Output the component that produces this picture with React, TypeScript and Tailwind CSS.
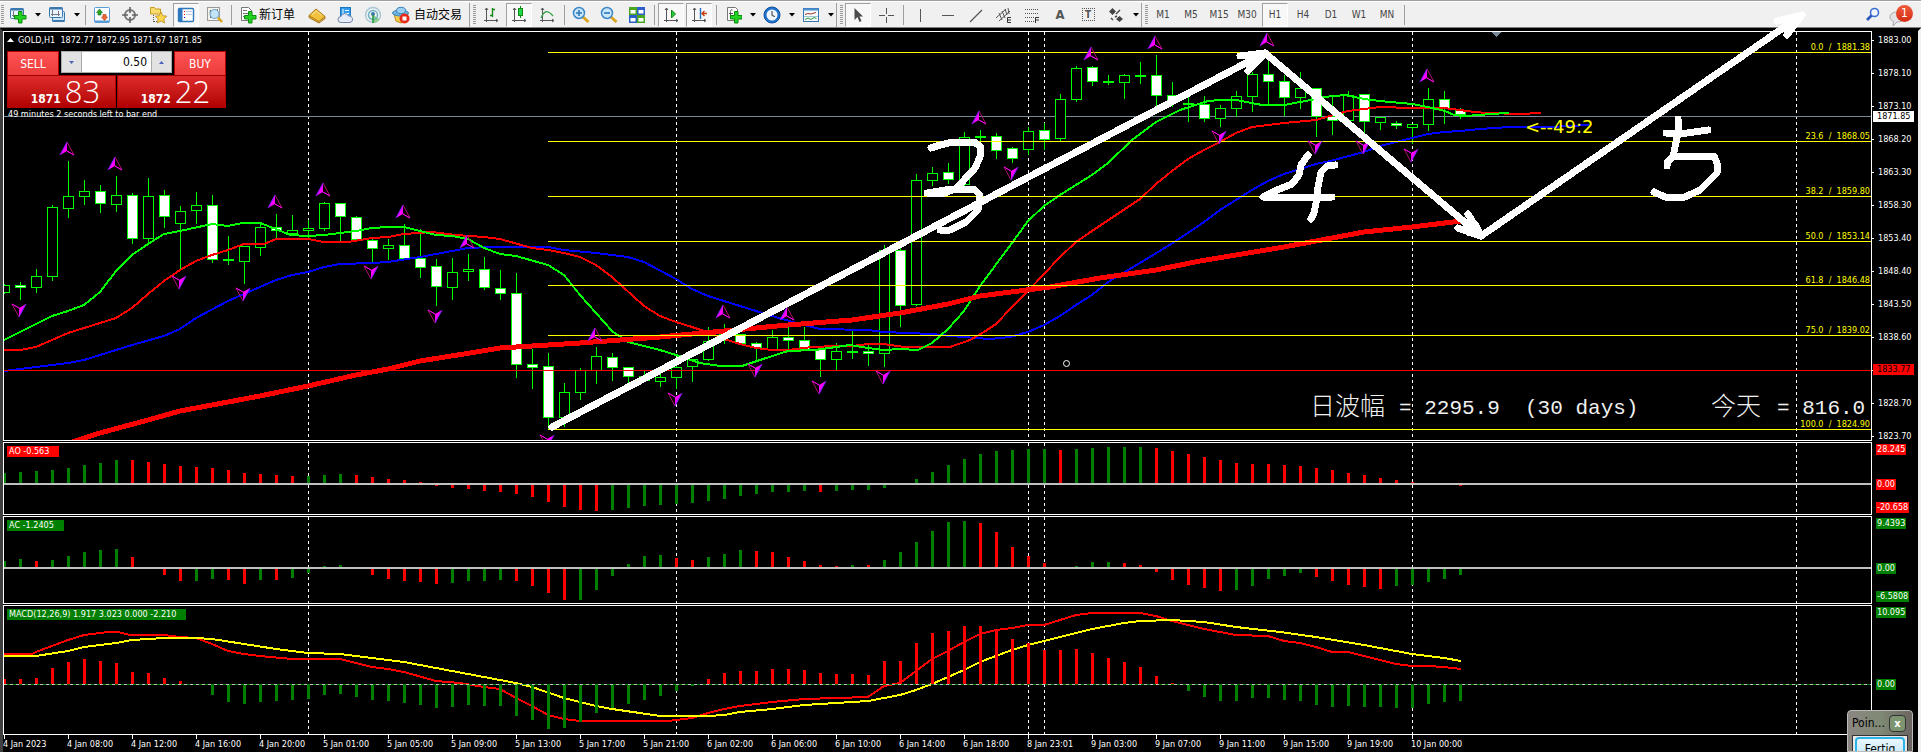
import type { ReactNode } from "react";

type Candle = [high: number, top: number, bottom: number, low: number, filled?: 1];
type Point = [number, number];

const STEP = 16;
const FIRST_X = 4;
const UP = "#008000";
const DOWN = "#ff0000";
const LIME = "#00ff00";

const barX = (i: number) => FIRST_X + i * STEP;

const candles: Candle[] = [
  [284, 285, 293, 293], [282, 285, 288, 299, 1], [269, 276, 288, 292], [205, 207, 277, 280],
  [161, 196, 209, 217], [180, 191, 197, 204], [185, 191, 204, 212, 1], [176, 195, 205, 211],
  [193, 195, 239, 243, 1], [178, 196, 239, 243], [190, 195, 217, 227, 1], [206, 211, 224, 270],
  [192, 205, 211, 223], [195, 205, 260, 262, 1], [236, 259, 261, 264], [246, 246, 262, 283],
  [224, 227, 248, 255], [214, 227, 231, 237, 1], [215, 230, 234, 234], [220, 228, 231, 237],
  [202, 203, 229, 230], [203, 203, 217, 240, 1], [216, 217, 240, 240, 1], [239, 240, 249, 261, 1],
  [239, 245, 249, 259], [224, 245, 259, 259, 1], [229, 258, 268, 277, 1], [259, 266, 287, 305, 1],
  [258, 272, 288, 299], [254, 269, 272, 280], [257, 269, 288, 289, 1], [270, 288, 294, 299, 1],
  [273, 293, 365, 377, 1], [349, 364, 368, 388, 1], [353, 366, 418, 429, 1], [383, 392, 418, 426],
  [368, 370, 393, 399], [347, 356, 371, 383], [353, 357, 368, 380, 1], [367, 367, 377, 383, 1],
  [371, 376, 381, 381, 1], [374, 377, 382, 386], [366, 367, 378, 388], [359, 359, 367, 381],
  [327, 341, 360, 360], [324, 334, 338, 343], [334, 334, 344, 344, 1], [342, 343, 348, 359, 1],
  [330, 337, 350, 350], [326, 337, 341, 349, 1], [327, 340, 350, 350, 1], [347, 349, 360, 376, 1],
  [343, 351, 360, 370], [331, 351, 353, 358], [345, 351, 354, 365, 1], [245, 250, 354, 366],
  [247, 250, 306, 326, 1], [174, 180, 305, 305], [167, 173, 181, 185], [163, 172, 180, 183, 1],
  [132, 137, 185, 185], [130, 136, 138, 141], [133, 136, 151, 158, 1], [147, 148, 159, 162, 1],
  [127, 131, 150, 154], [123, 130, 140, 149, 1], [94, 99, 139, 141], [66, 68, 100, 101],
  [66, 67, 82, 85, 1], [75, 81, 83, 84], [74, 75, 83, 98], [62, 75, 77, 83],
  [55, 75, 96, 105, 1], [82, 95, 103, 106, 1], [97, 103, 105, 121], [96, 104, 119, 121, 1],
  [105, 108, 119, 126], [91, 96, 109, 116], [72, 74, 97, 111], [60, 74, 82, 104, 1],
  [75, 81, 98, 115, 1], [72, 88, 98, 108], [88, 88, 117, 136, 1], [97, 116, 121, 134, 1],
  [91, 95, 121, 121], [94, 94, 122, 133, 1], [117, 117, 123, 129], [121, 123, 126, 128, 1],
  [124, 124, 128, 143], [88, 99, 125, 130], [91, 99, 109, 123, 1], [108, 110, 115, 118, 1],
];

// signed bar heights; the *Turns lists hold the indices where the colour flips, starting from green
const ao = [
  11, 12, 13, 14, 16, 19, 21, 24, 24, 22, 20, 18, 17, 16, 14, 11, 10, 9, 8, 8, 9, 10, 9, 7, 5, 4, 2, -2, -4, -5,
  -7, -8, -10, -13, -18, -23, -26, -27, -26, -24, -22, -21, -20, -19, -17, -15, -12, -10, -8, -8, -7, -8, -7, -6,
  -6, -4, 0, 5, 12, 19, 25, 30, 33, 34, 35, 35, 34, 35, 36, 37, 37, 37, 36, 33, 30, 27, 24, 21, 20, 20, 19, 18,
  16, 14, 11, 9, 6, 4, 2, 0, 0, -2,
];
const aoTurns = [8, 19, 22, 38, 51, 52, 66, 67, 72];

const ac = [
  7, 9, 7, 8, 12, 16, 18, 19, 11, 0, -7, -13, -13, -11, -12, -16, -12, -12, -10, -5, 2, 3, 0, -7, -11, -13, -14,
  -16, -15, -13, -13, -12, -13, -18, -25, -32, -32, -22, -8, 4, 12, 13, 10, 8, 11, 14, 18, 17, 16, 11, 7, 3, 2, 3,
  3, 8, 16, 26, 37, 46, 47, 45, 36, 21, 12, 5, 0, 2, 6, 6, 5, 3, -4, -12, -17, -20, -23, -22, -18, -11, -8, -5,
  -9, -13, -17, -19, -21, -18, -17, -14, -11, -7,
];
const acTurns = [2, 3, 8, 12, 14, 16, 17, 18, 23, 28, 32, 36, 42, 44, 47, 53, 54, 55, 61, 67, 70, 77, 82, 87];

const macd = [
  5, 5, 6, 16, 22, 25, 23, 21, 12, 11, 6, 3, 0, -11, -18, -20, -18, -17, -16, -15, -11, -10, -13, -16, -17, -19,
  -21, -24, -23, -21, -22, -22, -32, -36, -45, -44, -38, -29, -24, -20, -16, -12, -7, -2, 5, 11, 13, 13, 15, 15,
  14, 11, 10, 10, 9, 23, 23, 41, 51, 53, 58, 58, 53, 45, 41, 34, 34, 35, 31, 26, 22, 17, 8, 1, -7, -13, -17, -17,
  -14, -14, -16, -17, -21, -23, -22, -23, -23, -24, -24, -20, -18, -17,
];

const fastMa: Point[] = [
  [4, 340], [20, 332], [52, 316], [68, 311], [84, 305], [100, 292], [116, 271], [132, 255], [148, 244], [164, 234],
  [180, 231], [212, 224], [228, 226], [242, 223], [260, 223], [276, 229], [290, 235], [308, 236], [324, 235],
  [340, 233], [356, 231], [372, 228], [388, 227], [404, 227], [420, 231], [436, 235], [452, 236], [468, 239],
  [484, 248], [500, 254], [516, 256], [548, 265], [564, 275], [580, 295], [596, 313], [612, 331], [628, 342],
  [660, 350], [676, 355], [700, 363], [720, 366], [742, 366], [760, 360], [788, 351], [815, 350], [836, 347],
  [850, 345], [868, 348], [884, 350], [900, 349], [918, 350], [932, 343], [948, 329], [964, 311], [980, 286],
  [1012, 243], [1028, 221], [1044, 206], [1060, 195], [1092, 175], [1108, 163], [1132, 140], [1156, 122],
  [1180, 110], [1208, 101], [1220, 100], [1236, 100], [1262, 105], [1284, 105], [1300, 102], [1316, 99],
  [1324, 97], [1345, 95], [1364, 99], [1380, 101], [1412, 104], [1428, 107], [1445, 111], [1454, 115],
  [1464, 116], [1480, 115], [1490, 114], [1509, 113],
];
const midMa: Point[] = [
  [4, 350], [20, 350], [36, 347], [68, 333], [84, 328], [116, 318], [132, 308], [148, 294], [164, 281], [180, 270],
  [196, 261], [212, 255], [228, 250], [244, 244], [264, 244], [276, 239], [308, 239], [324, 242], [348, 242],
  [372, 238], [388, 237], [404, 234], [432, 232], [456, 235], [484, 237], [500, 239], [532, 248], [548, 250],
  [564, 253], [580, 257], [596, 265], [612, 277], [644, 306], [660, 316], [676, 322], [692, 327], [710, 333],
  [724, 339], [740, 344], [756, 348], [772, 350], [788, 350], [812, 347], [836, 346], [852, 346], [868, 344],
  [884, 344], [904, 347], [950, 347], [970, 340], [984, 332], [996, 324], [1012, 307], [1028, 291], [1044, 274],
  [1060, 257], [1076, 242], [1092, 231], [1140, 199], [1156, 184], [1172, 171], [1188, 159], [1204, 150],
  [1220, 142], [1236, 133], [1252, 127], [1284, 123], [1316, 120], [1330, 116], [1348, 111], [1380, 107],
  [1412, 108], [1444, 108], [1475, 112], [1486, 113], [1520, 114], [1541, 113],
];
const slowMa: Point[] = [
  [4, 371], [20, 369], [36, 367], [68, 363], [84, 360], [100, 355], [132, 345], [164, 336], [180, 329], [196, 318],
  [228, 301], [244, 294], [276, 280], [292, 275], [308, 272], [324, 267], [340, 264], [372, 263], [388, 262],
  [420, 257], [452, 251], [468, 248], [490, 247], [548, 247], [564, 250], [596, 253], [628, 257], [644, 262],
  [676, 279], [692, 289], [708, 296], [740, 306], [772, 316], [800, 324], [820, 329], [868, 330], [884, 332],
  [932, 334], [950, 336], [990, 339], [1010, 337], [1028, 332], [1044, 325], [1060, 316], [1076, 305],
  [1092, 295], [1108, 282], [1140, 263], [1176, 241], [1204, 222], [1220, 210], [1252, 190], [1268, 181],
  [1284, 174], [1316, 164], [1330, 161], [1364, 152], [1380, 146], [1412, 138], [1428, 134], [1444, 132],
  [1460, 131], [1480, 129], [1510, 127], [1550, 127], [1589, 125],
];
const longMa: Point[] = [
  [72, 442], [84, 438], [100, 433], [148, 420], [180, 411], [212, 405], [260, 396], [308, 386], [356, 375],
  [388, 369], [420, 361], [470, 353], [500, 348], [580, 343], [660, 337], [724, 331], [788, 325], [852, 320],
  [900, 313], [948, 304], [980, 296], [1050, 287], [1100, 278], [1156, 270], [1200, 261], [1284, 247],
  [1316, 241], [1364, 232], [1412, 227], [1461, 221],
];
const macdLine: Point[] = [
  [4, 654], [32, 654], [36, 652], [52, 646], [68, 640], [84, 635], [108, 632], [118, 632], [130, 635], [164, 635],
  [180, 637], [196, 638], [212, 644], [228, 651], [244, 654], [260, 656], [292, 659], [340, 659], [356, 663],
  [372, 667], [388, 669], [404, 672], [436, 681], [460, 683], [484, 687], [500, 689], [516, 698], [532, 706],
  [548, 715], [564, 719], [580, 721], [668, 721], [692, 718], [708, 713], [724, 709], [740, 706], [772, 702],
  [804, 699], [836, 698], [868, 697], [884, 686], [900, 683], [916, 671], [932, 659], [948, 651], [964, 642],
  [980, 634], [996, 630], [1012, 628], [1028, 625], [1044, 625], [1060, 620], [1076, 615], [1092, 613],
  [1140, 613], [1156, 616], [1172, 621], [1204, 629], [1220, 632], [1236, 635], [1268, 636], [1284, 641],
  [1300, 643], [1316, 647], [1332, 652], [1348, 652], [1364, 656], [1380, 660], [1396, 664], [1412, 666],
  [1428, 666], [1444, 667], [1461, 669],
];
const signalLine: Point[] = [
  [4, 656], [36, 656], [68, 651], [84, 647], [116, 643], [132, 640], [148, 639], [164, 638], [196, 638],
  [212, 639], [244, 644], [276, 649], [308, 653], [340, 654], [404, 662], [452, 671], [484, 677], [516, 683],
  [532, 687], [564, 698], [596, 706], [612, 709], [640, 713], [660, 716], [708, 716], [724, 715], [740, 712],
  [772, 709], [804, 705], [836, 703], [868, 701], [900, 695], [916, 690], [932, 684], [948, 677], [964, 670],
  [980, 662], [996, 656], [1012, 650], [1028, 645], [1060, 637], [1092, 629], [1124, 623], [1140, 621],
  [1172, 620], [1204, 622], [1236, 627], [1280, 632], [1316, 637], [1364, 645], [1412, 654], [1444, 658],
  [1461, 661],
];

// fractal arrows: bar index and the top of the glyph
const upFractals: Point[] = [
  [4, 142], [7, 157], [17, 195], [20, 183], [25, 205], [29, 235], [37, 328], [45, 305], [49, 307], [61, 111],
  [68, 47], [72, 36], [79, 33], [89, 69],
];
const downFractals: Point[] = [
  [1, 304], [11, 276], [15, 288], [23, 266], [27, 310], [34, 435], [42, 393], [47, 364], [51, 381], [55, 371],
  [63, 167], [76, 131], [82, 141], [85, 141], [88, 149],
];

const fibLevels: [string, number][] = [
  ["0.0\u00a0 /\u00a0 1881.38", 52],
  ["23.6\u00a0 /\u00a0 1868.05", 141],
  ["38.2\u00a0 /\u00a0 1859.80", 196],
  ["50.0\u00a0 /\u00a0 1853.14", 241],
  ["61.8\u00a0 /\u00a0 1846.48", 285],
  ["75.0\u00a0 /\u00a0 1839.02", 335],
  ["100.0\u00a0 /\u00a0 1824.90", 429],
];

const priceTicks = [
  "1883.00", "1878.10", "1873.10", "1868.20", "1863.30", "1858.30", "1853.40", "1848.40", "1843.50", "1838.60",
  "", "1828.70", "1823.70",
];

const timeTicks = [
  "4 Jan 2023", "4 Jan 08:00", "4 Jan 12:00", "4 Jan 16:00", "4 Jan 20:00", "5 Jan 01:00", "5 Jan 05:00",
  "5 Jan 09:00", "5 Jan 13:00", "5 Jan 17:00", "5 Jan 21:00", "6 Jan 02:00", "6 Jan 06:00", "6 Jan 10:00",
  "6 Jan 14:00", "6 Jan 18:00", "8 Jan 23:01", "9 Jan 03:00", "9 Jan 07:00", "9 Jan 11:00", "9 Jan 15:00",
  "9 Jan 19:00", "10 Jan 00:00",
];

const daySeparators = [308, 676, 1028, 1044, 1412, 1796];
const timeframes = ["M1", "M5", "M15", "M30", "H1", "H4", "D1", "W1", "MN"];

const toPoints = (pts: Point[]) => pts.map((p) => p.join(",")).join(" ");

function Line({ pts, color, width = 2 }: { pts: Point[]; color: string; width?: number }) {
  return <polyline points={toPoints(pts)} fill="none" stroke={color} strokeWidth={width} strokeLinejoin="round" />;
}

function DaySeparators({ from, to }: { from: number; to: number }) {
  return (
    <>
      {daySeparators.map((x) => (
        <line key={x} x1={x + 0.5} x2={x + 0.5} y1={from} y2={to} stroke="#fff" strokeDasharray="3 3" />
      ))}
    </>
  );
}

function Histogram({ values, zero, color }: { values: number[]; zero: number; color: (i: number) => string }) {
  return (
    <>
      {values.map((v, i) =>
        v === 0 ? null : (
          <rect key={i} x={barX(i) - 1} y={v > 0 ? zero - v : zero} width={3} height={Math.abs(v)} fill={color(i)} />
        ),
      )}
    </>
  );
}

function byTurns(turns: number[]) {
  return (i: number) => (turns.filter((t) => t <= i).length % 2 === 0 ? UP : DOWN);
}

function Fractal({ x, y, down }: { x: number; y: number; down?: boolean }) {
  return (
    <g transform={down ? `translate(${x} ${y + 13}) scale(-1 -1)` : `translate(${x} ${y})`}>
      <path d="M0 0 L-7 13 L0 9 Z" fill="#f0f" />
      <path d="M0 0 L7 13 L0 9" fill="none" stroke="#b0106c" />
      <path d="M0 9 L7 13" fill="none" stroke="#f0f" />
      <path d="M0 0 L-7 13" fill="none" stroke="#7a1cff" />
    </g>
  );
}

function Panel({
  top,
  height,
  label,
  labelColor,
  axis,
  children,
}: {
  top: number;
  height: string;
  label?: string;
  labelColor?: string;
  axis: ReactNode;
  children: ReactNode;
}) {
  return (
    <section className={`flex ${height}`}>
      <div className="relative min-w-0 flex-1 overflow-hidden border border-white">
        <svg className="block h-full w-full" shapeRendering="crispEdges" aria-hidden="true">
          <g transform={`translate(-4 ${-top - 1})`}>{children}</g>
        </svg>
        {label && (
          <span className={`absolute top-[3px] left-[3px] h-[11px] pr-2.5 pl-0.5 leading-[11px] ${labelColor}`}>
            {label}
          </span>
        )}
      </div>
      <div className="relative flex w-[46px] shrink-0 flex-col items-start">{axis}</div>
    </section>
  );
}

function AxisTag({ text, className }: { text: string; className: string }) {
  return <span className={`ml-1 h-[11px] px-px leading-[11px] ${className}`}>{text}</span>;
}

function Icon({ children }: { children: ReactNode }) {
  return (
    <svg width="18" height="18" viewBox="0 0 18 18" className="shrink-0" fill="none" aria-hidden="true">
      {children}
    </svg>
  );
}

function Tool({ label, pressed, children }: { label: string; pressed?: boolean; children: ReactNode }) {
  return (
    <button
      type="button"
      aria-label={label}
      aria-pressed={pressed}
      className={`mx-px flex h-6 w-[26px] shrink-0 items-center justify-center border ${
        pressed ? "border-t-[#a0a0a0] border-r-white border-b-white border-l-[#a0a0a0] bg-[#f8f8f8]" : "border-transparent"
      }`}
    >
      {children}
    </button>
  );
}

function DropTool({ label, children }: { label: string; children: ReactNode }) {
  return (
    <button type="button" aria-label={label} className="flex h-6 w-[39px] shrink-0 items-center gap-2 pl-[5px]">
      {children}
      <svg width="6" height="4" viewBox="0 0 6 4" className="shrink-0" aria-hidden="true">
        <path d="M0 0H6L3 3.6Z" fill="#000" />
      </svg>
    </button>
  );
}

function Separator() {
  return (
    <div className="flex w-1.5 shrink-0 justify-center">
      <span className="h-5 w-px bg-[#a0a0a0]" />
    </div>
  );
}

function Grip() {
  return (
    <svg width="3" height="20" viewBox="0 0 3 20" className="shrink-0" aria-hidden="true">
      <line x1="1.5" x2="1.5" y1="0" y2="20" stroke="#999" strokeWidth="3" strokeDasharray="1 1" />
    </svg>
  );
}

function GroupBreak() {
  return (
    <div className="flex w-2 shrink-0 items-center gap-[3px]">
      <span className="h-6 w-px bg-[#a0a0a0]" />
      <Grip />
    </div>
  );
}

function Plus({ x = 5, y = 5 }: { x?: number; y?: number }) {
  return (
    <path
      transform={`translate(${x} ${y})`}
      d="M4.5 0.5h3.5v4h4v3.5h-4v4h-3.5v-4h-4v-3.5h4z"
      fill="#22d322"
      stroke="#0a8a0a"
    />
  );
}

function Axes() {
  return <path d="M4.5 2V16M2 14.5H16M3 4l1.5-2L6 4M14 13l2 1.5-2 1.5" stroke="#555" />;
}

function Toolbar() {
  return (
    <header className="flex h-[25px] items-center bg-[#f0f0f0]">
      <div className="flex w-1 shrink-0 justify-end">
        <Grip />
      </div>
      <DropTool label="New chart">
        <Icon>
          <rect x="1.5" y="2.5" width="13" height="10" rx="1" fill="#eaf4fc" stroke="#3a78b0" />
          <path d="M1.5 3.5h13" stroke="#3a78b0" strokeWidth="2" />
          <path d="M4.5 5v6M3 9.5h7" stroke="#778" />
          <Plus />
        </Icon>
      </DropTool>
      <DropTool label="Profiles">
        <Icon>
          <rect x="4.5" y="5.5" width="12" height="10" rx="1" fill="#cfe4f5" stroke="#3a78b0" />
          <path d="M4.5 15h12" stroke="#3a78b0" strokeWidth="2" />
          <rect x="1.5" y="1.5" width="13" height="10" rx="1" fill="#eaf4fc" stroke="#3a78b0" />
          <path d="M1.5 2.5h13" stroke="#3a78b0" strokeWidth="2" />
          <path d="M4.5 4v6M3 8.5h9M10.5 5v5" stroke="#778" />
        </Icon>
      </DropTool>
      <Separator />
      <Tool label="Market watch">
        <Icon>
          <rect x="1.5" y="1.5" width="15" height="15" rx="1" fill="#fafcff" stroke="#5b9bd5" />
          <path d="M2 15.5h14" stroke="#5b9bd5" strokeWidth="2" />
          <path d="M6.5 3l3 3.5H8V9H5V6.5H3.5z" fill="#2aa52a" stroke="#14741a" strokeWidth=".6" />
          <path d="M11.5 14.5l3-3.5H13V8.5h-3V11H8.5z" fill="#ef6a32" stroke="#b03a10" strokeWidth=".6" />
        </Icon>
      </Tool>
      <Tool label="Data window">
        <Icon>
          <circle cx="9" cy="9" r="5" stroke="#777" strokeWidth="2" />
          <path d="M9 1v6M9 11v6M1 9h6M11 9h6" stroke="#666" strokeWidth="1.6" />
        </Icon>
      </Tool>
      <Tool label="Navigator">
        <Icon>
          <path d="M1.5 3.5v-2h4l1 1.5h5v5h-10z" fill="#f8dc6e" stroke="#c79a22" />
          <path d="M4.5 9v7M5 15.5h4" stroke="#555" strokeDasharray="1 1" />
          <path
            d="M12 6l1.8 3.7 4 .5-3 2.8.8 4-3.6-2-3.6 2 .8-4-3-2.8 4-.5z"
            fill="#fbd64a"
            stroke="#b98a1c"
            strokeWidth=".8"
          />
        </Icon>
      </Tool>
      <Tool label="Terminal" pressed>
        <Icon>
          <rect x="1.5" y="2.5" width="15" height="13" rx="1" fill="#fff" stroke="#2e78bd" strokeWidth="1.4" />
          <rect x="2" y="3" width="3.5" height="12" fill="#2e78bd" />
          <path d="M7 5.5h1M7 8.5h1" stroke="#e00" />
          <path d="M7 11.5h1" stroke="#00f" />
          <path d="M9 5.5h6M9 8.5h6" stroke="#bcd" />
        </Icon>
      </Tool>
      <Tool label="Strategy tester">
        <Icon>
          <rect x="2.5" y="1.5" width="12" height="13" fill="#f4f4ec" stroke="#999" />
          <path d="M5.5 4v8M12.5 3v5M4.5 6h2" stroke="#666" />
          <circle cx="9.5" cy="8" r="4.5" fill="#c3e3f7" stroke="#6da0c6" />
          <path d="M13 11.5l4 4.5" stroke="#d9a51d" strokeWidth="2.6" />
        </Icon>
      </Tool>
      <Separator />
      <button type="button" className="flex h-6 w-[69px] shrink-0 items-center gap-0.5 pl-[5px] text-[12px] text-black">
        <Icon>
          <path d="M2.5 1.5h7l3 3v10h-10z" fill="#fff" stroke="#777" />
          <path d="M4 4.5h4M4 7.5h6M4 10.5h6" stroke="#777" />
          <Plus />
        </Icon>
        新订单
      </button>
      <Tool label="MetaEditor">
        <Icon>
          <path d="M1 9.5L8 3l9 7.5L11 15.5z" fill="#f2c13c" stroke="#a8771a" />
          <path d="M1 9.5v2L11 17v-1.5M11 17l6-4.5v-2" fill="#d49b20" stroke="#a8771a" />
          <path d="M4 9l4.5-4 5 4.2" stroke="#fbe7a0" />
        </Icon>
      </Tool>
      <Tool label="Cloud">
        <Icon>
          <rect x="4.5" y="1.5" width="10" height="10" fill="#2f9bea" stroke="#1d78c0" />
          <path d="M7 3v7M9 4.5h4M9 7.5h4" stroke="#fff" />
          <path d="M5 16.5a3 3 0 010-6 4 4 0 017.5-.5 3.3 3.3 0 011.5 6.5z" fill="#e6edf8" stroke="#7486ac" />
        </Icon>
      </Tool>
      <Tool label="Signals">
        <Icon>
          <circle cx="9" cy="9" r="7.5" stroke="#a9c8d6" strokeWidth="1.5" />
          <path d="M9 9v8a8 8 0 006.5-4z" fill="#8ad08a" />
          <circle cx="9" cy="9" r="4.5" stroke="#6fb2c6" strokeWidth="1.5" />
          <circle cx="9" cy="8" r="2" fill="#3a78b0" />
          <path d="M9 9v8" stroke="#2a9a3a" strokeWidth="1.6" />
        </Icon>
      </Tool>
      <button type="button" className="flex h-6 w-[82px] shrink-0 items-center gap-1 pl-[5px] text-[12px] text-black">
        <Icon>
          <path d="M2 8l2 7 5 2 5-2 2-7z" fill="#f6cf4f" stroke="#b98a1c" />
          <ellipse cx="8.5" cy="7" rx="8" ry="3" fill="#6fb5e3" stroke="#3a83b8" />
          <ellipse cx="9" cy="4.5" rx="4.5" ry="3.2" fill="#9bd0f2" stroke="#3a83b8" />
          <circle cx="12.5" cy="12.5" r="5" fill="#e52a17" />
          <rect x="10.5" y="10.5" width="4" height="4" fill="#fff" />
        </Icon>
        自动交易
      </button>
      <GroupBreak />
      <Tool label="Bar chart">
        <Icon>
          <Axes />
          <path d="M10.5 2v9M10.5 3.5H13M8 9.5h2.5" stroke="#118a11" strokeWidth="1.4" />
        </Icon>
      </Tool>
      <Tool label="Candlesticks" pressed>
        <Icon>
          <Axes />
          <path d="M10.5 0v12" stroke="#118a11" />
          <rect x="8.5" y="2.5" width="4" height="7" fill="#22d84a" stroke="#118a11" />
        </Icon>
      </Tool>
      <Tool label="Line chart">
        <Icon>
          <Axes />
          <path d="M3 12c3-7 6-9 12-2" stroke="#3aa34a" strokeWidth="1.3" />
        </Icon>
      </Tool>
      <Separator />
      <Tool label="Zoom in">
        <Icon>
          <path d="M11 11l5.5 5" stroke="#d9a51d" strokeWidth="3" />
          <circle cx="7" cy="7" r="5.5" fill="#c9e6fa" stroke="#3d86c6" strokeWidth="1.5" />
          <path d="M4 7h6M7 4v6" stroke="#2f77b8" strokeWidth="1.6" />
        </Icon>
      </Tool>
      <Tool label="Zoom out">
        <Icon>
          <path d="M11 11l5.5 5" stroke="#d9a51d" strokeWidth="3" />
          <circle cx="7" cy="7" r="5.5" fill="#c9e6fa" stroke="#3d86c6" strokeWidth="1.5" />
          <path d="M4 7h6" stroke="#2f77b8" strokeWidth="1.6" />
        </Icon>
      </Tool>
      <Tool label="Tile windows">
        <Icon>
          <path d="M1 1h8v8H1zM9 9h8v8H9z" fill="#4aa520" />
          <path d="M9 1h8v8H9zM1 9h8v8H1z" fill="#2a5fc8" />
          <path d="M2.5 4h5v3.5h-5zM10.5 4h5v3.5h-5zM2.5 12h5v3.5h-5zM10.5 12h5v3.5h-5z" fill="#fff" />
        </Icon>
      </Tool>
      <Separator />
      <Tool label="Auto scroll" pressed>
        <Icon>
          <Axes />
          <path d="M9.5 4l4 4-4 4z" fill="#28c840" stroke="#118a11" />
        </Icon>
      </Tool>
      <Tool label="Chart shift" pressed>
        <Icon>
          <Axes />
          <path d="M10.5 2v11" stroke="#1f6fc0" strokeWidth="1.4" />
          <path d="M12 7.5h5M14.5 5L12 7.5l2.5 2.5" stroke="#c83a10" strokeWidth="1.4" />
        </Icon>
      </Tool>
      <Separator />
      <DropTool label="Indicators">
        <Icon>
          <path d="M3.5 1.5h8l2 2v11h-10z" fill="#fff" stroke="#777" />
          <path d="M8.5 4c-2-1-2 1-2 3v5M5 7.5h4" stroke="#555" />
          <Plus x={6} />
        </Icon>
      </DropTool>
      <DropTool label="Periods">
        <Icon>
          <circle cx="9" cy="9" r="8" fill="#1f74cf" stroke="#0f4f9c" />
          <circle cx="9" cy="9" r="5.5" fill="#eef5fc" />
          <path d="M9 5v4.5l3 1" stroke="#333" />
        </Icon>
      </DropTool>
      <DropTool label="Templates">
        <Icon>
          <rect x="1.5" y="2.5" width="15" height="13" fill="#f6faff" stroke="#3a78b0" />
          <path d="M1.5 3.5h15" stroke="#4a8fd0" strokeWidth="2" />
          <path d="M3 8.5l3-1 3 .5 5-1.5" stroke="#a33a20" />
          <path d="M2 10.5h14" stroke="#9cc" />
          <path d="M3 13.5l3-1.5 3 1.5 3-2 2.5 1" stroke="#2a9a3a" />
        </Icon>
      </DropTool>
      <GroupBreak />
      <Tool label="Cursor" pressed>
        <Icon>
          <path d="M5.5 2v12l3-3 2 5 2-1-2-4.5H14z" fill="#4a4a4a" />
        </Icon>
      </Tool>
      <Tool label="Crosshair">
        <Icon>
          <path d="M9.5 2v6M9.5 11v6M2 9.5h6M11 9.5h6" stroke="#555" />
        </Icon>
      </Tool>
      <Separator />
      <Tool label="Vertical line">
        <Icon>
          <path d="M9.5 3v13" stroke="#555" />
        </Icon>
      </Tool>
      <Tool label="Horizontal line">
        <Icon>
          <path d="M3 9.5h12" stroke="#555" />
        </Icon>
      </Tool>
      <Tool label="Trendline">
        <Icon>
          <path d="M3 16L15 4" stroke="#555" strokeWidth="1.2" />
        </Icon>
      </Tool>
      <Tool label="Equidistant channel">
        <Icon>
          <path d="M1 12L11 3M4 15L15 5M4 7l3 7M7 5l3 7M10 3l2 6M13 2l1 6" stroke="#555" />
          <path d="M16 11.5h-3.5v5H16M12.5 14H16" stroke="#333" />
        </Icon>
      </Tool>
      <Tool label="Fibonacci retracement">
        <Icon>
          <path d="M2 3.5h13M2 7.5h13M2 11.5h9M2 15.5h9" stroke="#555" strokeDasharray="1 1" />
          <path d="M16 11.5h-3.5V17M12.5 14H16" stroke="#333" />
        </Icon>
      </Tool>
      <Tool label="Text">
        <span className="text-[13px] font-bold text-[#555]">A</span>
      </Tool>
      <Tool label="Text label">
        <span className="flex h-[13px] w-[13px] items-center justify-center border border-dotted border-[#555] text-[10px] font-bold text-[#555]">
          T
        </span>
      </Tool>
      <DropTool label="Arrows">
        <Icon>
          <path d="M5.5 2l3.5 3.5L5.5 9 2 5.5zM12.5 10l3.5 3-3.5 3L9 13z" fill="#444" />
          <path d="M4 12l2 2M9 8l4-4M8 11l2-1" stroke="#444" strokeWidth="1.4" />
        </Icon>
      </DropTool>
      <GroupBreak />
      {timeframes.map((tf) => (
        <Tool key={tf} label={tf} pressed={tf === "H1"}>
          <span className="text-[10px] text-[#444]">{tf}</span>
        </Tool>
      ))}
      <Separator />
      <div className="ml-auto flex items-center gap-2 pr-2">
        <button type="button" aria-label="Search">
          <Icon>
            <circle cx="11.5" cy="6.5" r="4" fill="#f4f8ff" stroke="#3b6fd6" strokeWidth="1.6" />
            <path d="M8.5 9.5L4 14" stroke="#2a57b8" strokeWidth="2.6" />
          </Icon>
        </button>
        <button type="button" aria-label="Notifications" className="relative h-6 w-6">
          <svg width="18" height="16" viewBox="0 0 18 16" className="absolute top-2 left-0" aria-hidden="true">
            <path d="M8 1c4 0 7 2 7 5s-3 5-7 5l-4 4 .5-4.5C2.5 9.5 1 8 1 6c0-3 3-5 7-5z" fill="#e4e4e8" stroke="#aaa" />
          </svg>
          <span className="absolute top-0.5 right-0 flex h-[17px] w-[17px] items-center justify-center rounded-full bg-gradient-to-b from-[#ee5a3a] to-[#d42a12] text-[12px] leading-none text-white">
            1
          </span>
        </button>
      </div>
    </header>
  );
}

function Quote({ side, small, big }: { side: string; small: string; big: string }) {
  const buy = side === "BUY";
  return (
    <button
      type="button"
      aria-label={`${side} ${small}.${big}`}
      className={`flex h-[57px] w-[109px] flex-col text-white ${buy ? "items-end" : "items-start"}`}
    >
      <span className="flex h-6 w-[52px] items-center justify-center border border-b-0 border-[#b40000] bg-gradient-to-b from-[#ff5252] to-[#ec3c3c] text-[12px]">
        {side}
      </span>
      <span className="flex h-[33px] w-full items-end justify-center gap-1 border border-t-[#a00000] border-[#b40000] bg-gradient-to-b from-[#de2a2a] to-[#b00000] pb-0.5 pl-2">
        <b className="text-[12px] leading-[12px]">{small}</b>
        <span className="font-['Open_Sans'] text-[31px] leading-[28px] font-light">{big}</span>
      </span>
    </button>
  );
}

function OneClickTrading() {
  return (
    <form className="absolute top-[19px] left-[3px] flex gap-px" onSubmit={(e) => e.preventDefault()}>
      <Quote side="SELL" small="1871" big="83" />
      <Quote side="BUY" small="1872" big="22" />
      <div className="absolute top-0 left-[54px] flex h-[22px] w-[111px] border border-[#aaa] bg-white">
        <button
          type="button"
          aria-label="Decrease volume"
          className="flex w-5 shrink-0 items-center justify-center border-r border-[#aaa] bg-[#e2e2e2]"
        >
          <svg width="5" height="3" aria-hidden="true">
            <path d="M0 0H5L2.5 3Z" fill="#4a62b8" />
          </svg>
        </button>
        <input
          aria-label="Volume"
          defaultValue="0.50"
          className="w-0 min-w-0 flex-1 bg-white pr-1 text-right text-[12px] text-black outline-none"
        />
        <button
          type="button"
          aria-label="Increase volume"
          className="flex w-5 shrink-0 items-center justify-center border-l border-[#aaa] bg-[#e2e2e2]"
        >
          <svg width="5" height="3" aria-hidden="true">
            <path d="M0 3H5L2.5 0Z" fill="#4a62b8" />
          </svg>
        </button>
      </div>
    </form>
  );
}

function PriceChart() {
  return (
    <>
      <DaySeparators from={32} to={440} />
      <rect x={4} y={116} width="100%" height={1} fill="#778899" />
      {candles.map(([high, top, bottom, low, filled], i) => {
        const x = barX(i);
        return (
          <g key={i}>
            <rect x={x} y={high} width={1} height={low - high + 1} fill={LIME} />
            <rect x={x - 5} y={top} width={11} height={bottom - top} fill={LIME} />
            {bottom - top > 2 && (
              <rect x={x - 4} y={top + 1} width={9} height={bottom - top - 2} fill={filled ? "#fff" : "#000"} />
            )}
          </g>
        );
      })}
      <Line pts={slowMa} color="#0000ff" />
      <Line pts={midMa} color={DOWN} />
      <Line pts={fastMa} color={LIME} />
      <Line pts={longMa} color={DOWN} width={5} />
      <rect x={4} y={370} width="100%" height={1} fill={DOWN} />
      {fibLevels.map(([text, y]) => (
        <g key={text} fill="#ffff00">
          <rect x={548} y={y} width="100%" height={1} />
          <text x={1870} y={y - 2} textAnchor="end">
            {text}
          </text>
        </g>
      ))}
      <g shapeRendering="auto">
        {upFractals.map(([i, y]) => (
          <Fractal key={i} x={barX(i) - 1} y={y} />
        ))}
        {downFractals.map(([i, y]) => (
          <Fractal key={i} x={barX(i) - 1} y={y} down />
        ))}
        <circle cx={1066.5} cy={363.5} r={3} fill="none" stroke="#fff" />
      </g>
      <path d="M1491 32h10l-5 5z" fill="#778899" />
      <text x={1525} y={133} fill="#ffff00" fontSize={18} fontFamily="DejaVu Sans">
        &lt;--49:2
      </text>
      <g
        fill="#f0f0f0"
        fontFamily="'Liberation Mono', 'Noto Sans CJK SC', monospace"
        fontSize={21}
        fontWeight={300}
      >
        <text x={1310} y={415} fontSize={25}>
          日波幅
        </text>
        <text x={1399} y={414}>{"= 2295.9\u00a0\u00a0(30 days)"}</text>
        <text x={1711} y={415} fontSize={25}>
          今天
        </text>
        <text x={1777} y={414}>= 816.0</text>
      </g>
    </>
  );
}

// hand-drawn wave count, laid over the whole terminal
function WaveMarkup() {
  return (
    <svg
      className="pointer-events-none absolute inset-0 h-full w-full"
      fill="none"
      stroke="#fff"
      strokeWidth={7}
      strokeLinecap="round"
      strokeLinejoin="round"
      shapeRendering="crispEdges"
      aria-hidden="true"
    >
      <path d="M552 427L1265 53M1240 56L1265 53L1248 71" />
      <path d="M1265 53L1481 236M1468 214L1481 236L1458 228" />
      <path d="M1481 236L1802 15M1777 21L1802 15L1787 35" />
      <path d="M1251 55L1265 53L1255 64ZM1475 224L1481 236L1468 232ZM1789 18L1802 15L1794 26Z" fill="#fff" />
      <path d="M931 148L940 145L953 142L974 142L981 147L980 157L975 168L964 180L957 188L942 194L927 193L951 189L974 189L980 195L978 210L966 222L950 230L940 230" />
      <path d="M1308 155L1301 165L1299 175L1292 184L1277 190L1263 197H1332M1335 165L1327 166L1321 172L1318 187L1316 203L1314 213L1311 219" />
      <path d="M1678 119V133L1675 147L1673 157L1667 162V166M1666 133H1687L1708 130M1673 157L1714 156L1717 163V173L1700 190L1685 197H1665L1654 192" />
    </svg>
  );
}

function PointerDialog() {
  return (
    <aside className="absolute right-2 bottom-0 flex h-[42px] w-[66px] flex-col overflow-hidden rounded-t border border-[#bbb] bg-gradient-to-r from-[#8c8682] via-[#7f8a74] to-[#6b6460] text-black">
      <div className="flex h-6 shrink-0 items-center justify-between pr-1.5 pl-1 text-[12px]">
        <span>Poin...</span>
        <button
          type="button"
          aria-label="Close"
          className="flex h-[17px] w-[17px] items-center justify-center rounded-sm border border-[#333] bg-[#7d9470] text-[11px] leading-none font-bold text-white"
        >
          x
        </button>
      </div>
      <div className="mx-1 flex justify-center border border-b-0 border-[#333] bg-[#e8e8e8] px-0.5 pt-px">
        <button
          type="button"
          className="h-[23px] w-full rounded-sm border-2 border-[#2fb4e8] bg-gradient-to-b from-[#eaf6fd] to-[#bfe4f8] text-[12px] leading-4"
        >
          Fertig
        </button>
      </div>
    </aside>
  );
}

export default function App() {
  return (
    <div className="relative h-screen overflow-hidden bg-black font-['DejaVu_Sans_Condensed','Noto_Sans_CJK_SC',sans-serif] text-[9px] text-white">
      <div className="border-t border-b border-t-[#a0a0a0] border-b-[#808080]">
        <div className="border-t border-white">
          <Toolbar />
        </div>
      </div>
      <main className="flex h-full flex-col gap-px border-t-[3px] border-r-[3px] border-l-[3px] border-t-black border-r-[#f0f0f0] border-l-[#404040]">
        <Panel
          top={31}
          height="h-[410px]"
          axis={
            <>
              <div className="-mt-[7px] flex flex-col">
                {priceTicks.map((t, i) => (
                  <span key={i} className="flex h-[33px] items-center gap-1 before:h-px before:w-0.5 before:bg-white">
                    {t}
                  </span>
                ))}
              </div>
              <span className="absolute top-[80px] left-px h-[11px] w-[41px] bg-white pl-1 leading-[11px] text-black">
                1871.85
              </span>
              <span className="absolute top-[333px] left-px h-[11px] w-[41px] bg-[#ff0000] pl-1 leading-[11px] text-black">
                1833.77
              </span>
            </>
          }
        >
          <PriceChart />
        </Panel>
        <Panel
          top={442}
          height="h-[73px]"
          label="AO -0.563"
          labelColor="bg-[#ff0000]"
          axis={
            <>
              <AxisTag text="28.245" className="mt-0.5 bg-[#ff0000]" />
              <AxisTag text="0.00" className="mt-6 bg-[#ff0000]" />
              <AxisTag text="-20.658" className="mt-3 bg-[#ff0000]" />
            </>
          }
        >
          <DaySeparators from={443} to={514} />
          <Histogram values={ao} zero={484} color={byTurns(aoTurns)} />
          <rect x={4} y={483} width="100%" height={2} fill="#c0c0c0" />
        </Panel>
        <Panel
          top={516}
          height="h-[88px]"
          label="AC -1.2405"
          labelColor="bg-[#008000]"
          axis={
            <>
              <AxisTag text="9.4393" className="mt-0.5 bg-[#008000]" />
              <AxisTag text="0.00" className="mt-[34px] bg-[#008000]" />
              <AxisTag text="-6.5808" className="mt-[17px] bg-[#008000]" />
            </>
          }
        >
          <DaySeparators from={517} to={603} />
          <Histogram values={ac} zero={568} color={byTurns(acTurns)} />
          <rect x={4} y={567} width="100%" height={2} fill="#c0c0c0" />
        </Panel>
        <Panel
          top={605}
          height="h-[130px]"
          label="MACD(12,26,9) 1.917 3.023 0.000 -2.210"
          labelColor="bg-[#008000]"
          axis={
            <>
              <AxisTag text="10.095" className="mt-0.5 bg-[#008000]" />
              <AxisTag text="0.00" className="mt-[61px] bg-[#008000]" />
            </>
          }
        >
          <DaySeparators from={606} to={734} />
          <Line pts={macdLine} color={DOWN} />
          <Line pts={signalLine} color="#ffff00" />
          <Histogram values={macd} zero={684} color={(i) => (macd[i] > 0 ? DOWN : UP)} />
          <rect x={4} y={684} width="100%" height={1} fill={UP} />
          <line x1={4} x2={4000} y1={684.5} y2={684.5} stroke="#c0c0c0" strokeDasharray="3 3" />
        </Panel>
        <div className="-mt-px flex overflow-hidden">
          {timeTicks.map((t) => (
            <span key={t} className="w-16 shrink-0 whitespace-nowrap">
              <span className="ml-px block h-1 w-px bg-white" />
              <span className="block leading-[10px]">{t}</span>
            </span>
          ))}
        </div>
      </main>
      <div className="absolute top-[32px] left-1">
        <p className="flex items-center gap-1 pl-[3px] leading-4 whitespace-pre">
          <svg width="7" height="4" aria-hidden="true">
            <path d="M0 4H7L3.5 0Z" fill="#fff" />
          </svg>
          GOLD,H1{"\u00a0 "}1872.77 1872.95 1871.67 1871.85
        </p>
        <OneClickTrading />
        <p className="mt-[60px] pl-1 leading-[12px] whitespace-nowrap">49 minutes 2 seconds left to bar end</p>
      </div>
      <WaveMarkup />
      <PointerDialog />
    </div>
  );
}
